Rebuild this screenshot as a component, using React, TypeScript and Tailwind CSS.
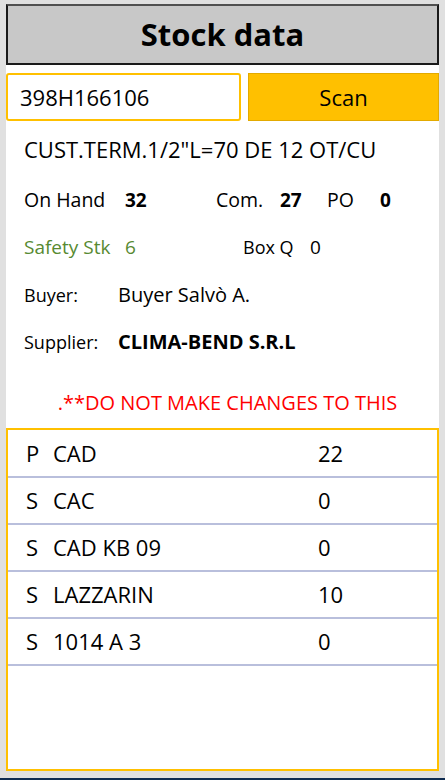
import React from "react";

const rows = [
  { t: "P", name: "CAD", qty: "22" },
  { t: "S", name: "CAC", qty: "0" },
  { t: "S", name: "CAD KB 09", qty: "0" },
  { t: "S", name: "LAZZARIN", qty: "10" },
  { t: "S", name: "1014 A 3", qty: "0" },
];

export default function App() {
  return (
    <div
      className="w-[445px] h-[780px] bg-[#e0e0e0] flex flex-col text-black overflow-hidden"
      style={{ fontFamily: '"Open Sans", "Noto Sans", sans-serif' }}
    >
      <div className="flex-1 mx-[6px] mt-[4px] bg-white flex flex-col">
        <div className="h-[61px] bg-[#c8c8c8] border-2 border-[#1a1a1a] border-t-[#505050] flex items-center justify-center">
          <span className="text-[31px] font-bold leading-none">Stock data</span>
        </div>
        <div className="flex gap-[7px] mt-[8px] h-[48px]">
          <div className="w-[235px] border-2 border-[#ffc000] rounded-[3px] flex items-center pl-[12px] text-[22px]">
            398H166106
          </div>
          <div className="flex-1 bg-[#ffc000] border border-[#e3aa00] flex items-center justify-center text-[22px]">
            Scan
          </div>
        </div>
        <div className="pl-[18px] mt-[14px] text-[22px] leading-[28px]">CUST.TERM.1/2"L=70 DE 12 OT/CU</div>
        <div className="flex items-center pl-[18px] mt-[25px] text-[20px] leading-[24px]">
          <span className="w-[101px] text-[19.5px]">On Hand</span>
          <span className="w-[91px] font-bold text-[19px]">32</span>
          <span className="w-[64px] text-[19.5px]">Com.</span>
          <span className="w-[47px] font-bold text-[19px]">27</span>
          <span className="w-[53px] text-[19.5px]">PO</span>
          <span className="font-bold text-[19px]">0</span>
        </div>
        <div className="flex items-center pl-[18px] mt-[23px] text-[18px] leading-[24px]">
          <span className="w-[101px] text-[#578a31] text-[19px]">Safety Stk</span>
          <span className="w-[118px] text-[#578a31] text-[19px]">6</span>
          <span className="w-[67px]">Box Q</span>
          <span className="text-[19px]">0</span>
        </div>
        <div className="flex items-center pl-[18px] mt-[23px] leading-[26px]">
          <span className="w-[94px] text-[18px]">Buyer:</span>
          <span className="text-[20px]">Buyer Salvò A.</span>
        </div>
        <div className="flex items-center pl-[18px] mt-[21px] leading-[26px]">
          <span className="w-[94px] text-[18px]">Supplier:</span>
          <span className="text-[20px] font-bold">CLIMA-BEND S.R.L</span>
        </div>
        <div className="mt-[35px] pl-[10px] text-center text-[20px] leading-[26px] text-[#ff0000]">.**DO NOT MAKE CHANGES TO THIS</div>
        <div className="mt-[12px] h-[343px] border-2 border-[#ffc000] flex flex-col">
          {rows.map((r, i) => (
            <div key={i} className={`${i === 0 ? "h-[48px]" : "h-[47px]"} border-b-2 border-[#b9bfdc] flex items-center text-[22px] shrink-0`}>
              <span className="w-[27px] pl-[18px] box-content">{r.t}</span>
              <span className="w-[265px]">{r.name}</span>
              <span>{r.qty}</span>
            </div>
          ))}
        </div>
      </div>
      <div className="h-[7px]" />
      <div className="h-[2px] bg-[#0f2b50]" />
    </div>
  );
}
